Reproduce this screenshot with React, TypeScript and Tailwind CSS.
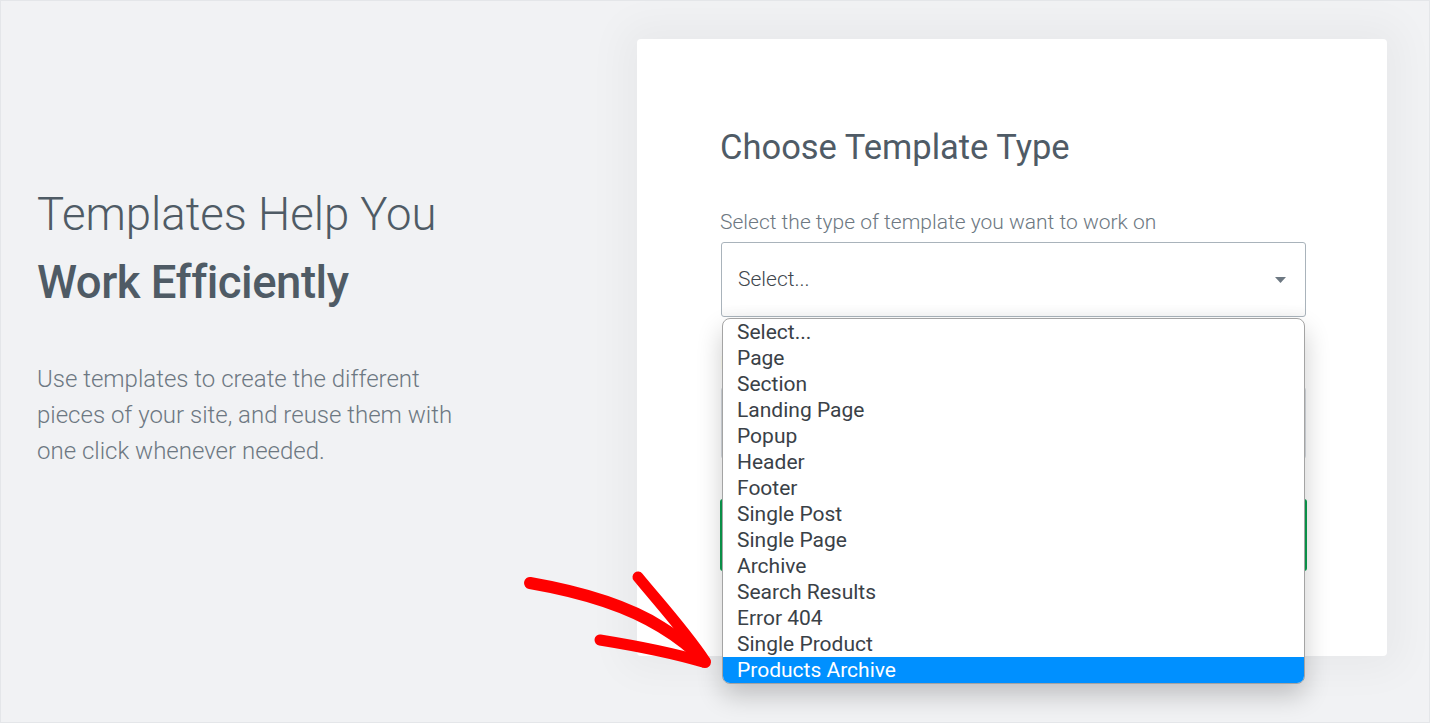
import React from "react";

const options = [
  "Select...",
  "Page",
  "Section",
  "Landing Page",
  "Popup",
  "Header",
  "Footer",
  "Single Post",
  "Single Page",
  "Archive",
  "Search Results",
  "Error 404",
  "Single Product",
  "Products Archive",
];

export default function App() {
  return (
    <div
      className="relative flex h-[723px] w-[1430px] overflow-hidden border border-[#e4e6e9] bg-[#f1f2f4]"
      style={{ fontFamily: "Roboto, 'Noto Sans', sans-serif" }}
    >
      {/* Left column */}
      <div className="w-[636px] shrink-0 pl-[36px] pt-[180px]">
        <h1 className="text-[45.5px] font-light leading-[68px] text-[#4f5b65]">
          Templates Help You
          <br />
          <span className="font-medium tracking-[-0.5px]">Work Efficiently</span>
        </h1>
        <p className="mt-[44px] w-[440px] text-[24px] font-light leading-[36px] text-[#6d7882]">
          Use templates to create the different pieces of your site, and reuse them with one click whenever needed.
        </p>
      </div>

      {/* Card */}
      <div className="mt-[38px] h-[617px] w-[750px] shrink-0 rounded-[4px] bg-white pl-[83px] pr-[81px] pt-[88px] shadow-[0_0_40px_14px_rgba(0,0,0,0.04)]">
        <h2 className="text-[34.5px] font-normal leading-[40px] text-[#4f5b66]">Choose Template Type</h2>
        <div className="mt-[41px] text-[21px] font-light leading-[28px] text-[#6d7882]">
          Select the type of template you want to work on
        </div>
        <div className="relative mt-[6px] ml-[1px]">
          <div className="flex h-[75px] items-center justify-between rounded-[3px] border border-[#a9b3bb] bg-white pl-[16px] pr-[19px] shadow-[inset_0_-14px_12px_-10px_rgba(0,0,0,0.04)]">
            <span className="text-[21px] font-light text-[#3f474e]">Select...</span>
            <svg width="11" height="6" viewBox="0 0 11 6">
              <path d="M0 0 H11 L5.5 6 Z" fill="#6d7882" />
            </svg>
          </div>

          {/* Underlying fields (hidden behind dropdown) */}
          <div className="mt-[38px] text-[19px] font-medium leading-[16px] text-[#6d7882]">Name your template</div>
          <div className="mt-[16px] h-[72px] rounded-[3px] border border-[#d5dadf]"></div>
          <div className="mt-[40px] h-[72px] -ml-[1px] w-[587px] rounded-[3px] bg-[#0a9e4f]"></div>

          {/* Open dropdown list */}
          <div className="absolute left-[1px] top-[76px] w-[583px] overflow-hidden rounded-[8px] border border-[#a4a4a4] bg-white shadow-[0_12px_26px_rgba(0,0,0,0.2)]">
            {options.map((o) => (
              <div
                key={o}
                className={
                  o === "Products Archive"
                    ? "h-[26px] bg-[#0090ff] pl-[14px] text-[21px] leading-[26px] text-white"
                    : "h-[26px] pl-[14px] text-[21px] leading-[26px] text-[#3a4147]"
                }
              >
                {o}
              </div>
            ))}
          </div>
        </div>
      </div>

      {/* Red hand-drawn arrow */}
      <svg
        className="pointer-events-none absolute left-0 top-0"
        width="1430"
        height="723"
        viewBox="0 0 1430 723"
      >
        <g fill="none" stroke="#ff0000" strokeLinecap="round" strokeLinejoin="round">
          <path d="M529 582 C 575 590, 625 604, 660 626 C 680 638, 694 650, 704 661" strokeWidth="12" />
          <path d="M637 576 C 660 604, 684 630, 704 660" strokeWidth="11" />
          <path d="M599 639 C 630 644, 665 650, 702 661" strokeWidth="11" />
        </g>
      </svg>
    </div>
  );
}
